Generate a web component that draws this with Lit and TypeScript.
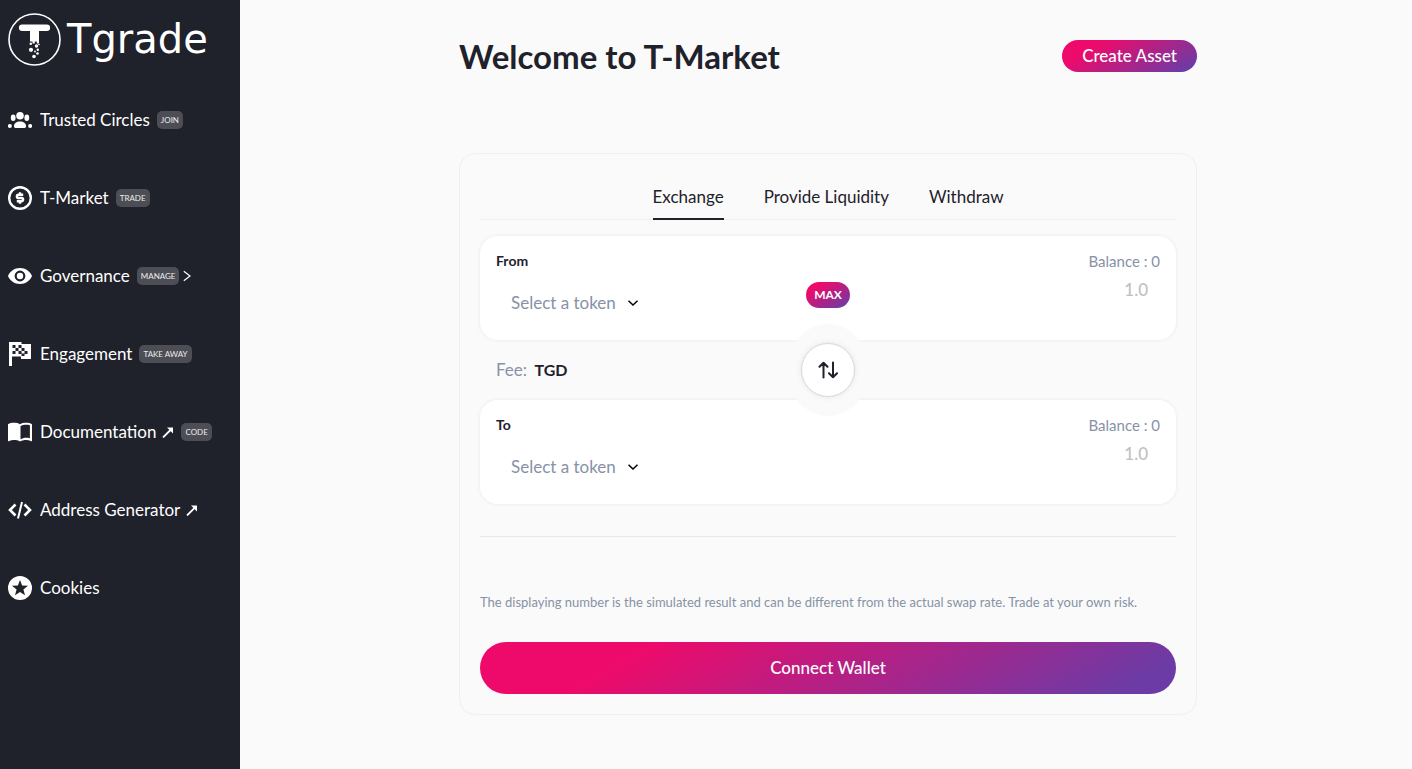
import { LitElement, html, css, svg, nothing } from "lit";
import type { TemplateResult, SVGTemplateResult } from "lit";
import { customElement, property, state } from "lit/decorators.js";
import { classMap } from "lit/directives/class-map.js";

interface NavItem {
  label: string;
  icon: SVGTemplateResult;
  badge?: string;
  external?: boolean;
  expandable?: boolean;
}

const icons = {
  circles: svg`<circle cx="12" cy="7.800" r="3.800"/><ellipse cx="5.200" cy="9.800" rx="2.400" ry="3.200"/><ellipse cx="18.800" cy="9.800" rx="2.400" ry="3.200"/><path d="M6 18.200c0-2.800 2.400-4.600 6-4.600s6 1.800 6 4.600c0 1.200-.7 1.800-1.900 1.800H7.900C6.700 20 6 19.400 6 18.200z"/><circle cx="1.900" cy="18" r="2"/><circle cx="22.100" cy="18" r="2"/>`,
  market: svg`<circle cx="12" cy="12" r="10.800" fill="none" stroke="currentColor" stroke-width="2.400"/><path d="M15.200 8.800h-4.700a1.600 1.600 0 0 0 0 3.200h3a1.600 1.600 0 0 1 0 3.200H8.800M12 6.200v2.600M12 15.200v2.600" fill="none" stroke="currentColor" stroke-width="2.400"/>`,
  eye: svg`<path fill-rule="evenodd" d="M12 4C6.500 4 1.900 7.300 0 12c1.900 4.700 6.500 8 12 8s10.100-3.300 12-8c-1.900-4.700-6.500-8-12-8zm0 13.400a5.400 5.400 0 1 1 0-10.800 5.400 5.400 0 0 1 0 10.800zm0-2.200a3.200 3.200 0 1 0 0-6.400 3.200 3.200 0 0 0 0 6.400z"/>`,
  flag: svg`<path fill-rule="evenodd" d="M1 0h12.500v2H23v15H13v-2.500H4V24H1zM4.500 3v3h3V3zM10.500 3v3h3V3zM7.500 6v3h3V6zM4.500 9v3h3V9zM13.500 6v3h3V6zM10.500 9v3h3V9zM16.500 9v3h3V9zM13.500 11.500v2.500h3v-2.500z"/>`,
  book: svg`<path fill-rule="evenodd" d="M12 4.300C10.300 3.200 8.300 2.800 6 2.800S1.700 3.200 0 4.300v16.500c0 .4.400.6.700.5 1.600-.8 3.600-1.200 5.300-1.200 2.200 0 4.400.4 6 1.500 1.600-1 3.900-1.500 6-1.500 1.800 0 3.700.4 5.300 1.200.3.100.7-.1.700-.5V4.300c-1.700-1.100-3.700-1.500-6-1.500s-4.300.4-6 1.500zM21.900 18.300c-1.200-.4-2.500-.5-3.900-.5-1.700 0-4.100.6-5.500 1.500V6.200C13.900 5.300 16.300 4.800 18 4.800c1.400 0 2.700.1 3.900.5z"/>`,
  code: svg`<path d="M7.500 6.500 2 12l5.500 5.500M16.500 6.500 22 12l-5.500 5.500" fill="none" stroke="currentColor" stroke-width="2.600"/><path d="M14 4 10 20.500" fill="none" stroke="currentColor" stroke-width="2"/>`,
  star: svg`<path fill-rule="evenodd" d="M12 0a12 12 0 1 0 0 24 12 12 0 0 0 0-24zm0 4 2.100 5.600 5.900.2-4.600 3.700 1.600 5.700-5-3.300-5 3.300 1.600-5.700L4 9.800l5.900-.2z"/>`,
};

const navItems: NavItem[] = [
  { label: "Trusted Circles", icon: icons.circles, badge: "JOIN" },
  { label: "T-Market", icon: icons.market, badge: "TRADE" },
  { label: "Governance", icon: icons.eye, badge: "MANAGE", expandable: true },
  { label: "Engagement", icon: icons.flag, badge: "TAKE AWAY" },
  { label: "Documentation", icon: icons.book, badge: "CODE", external: true },
  { label: "Address Generator", icon: icons.code, external: true },
  { label: "Cookies", icon: icons.star },
];

@customElement("side-nav")
class SideNav extends LitElement {
  static styles = css`
    :host {
      display: block;
      box-sizing: border-box;
      padding: 12px 8px;
      background: #1f212b;
      color: #fff;
      font: 17px/24px Lato, sans-serif;
    }
    .brand {
      display: flex;
      align-items: center;
      gap: 6px;
      height: 54px;
      color: inherit;
      text-decoration: none;
    }
    .mark {
      flex: none;
      width: 53px;
      height: 53px;
    }
    .name {
      font: 40px/54px "DejaVu Sans", sans-serif;
    }
    ul {
      display: flex;
      flex-direction: column;
      gap: 54px;
      margin: 42px 0 0;
      padding: 0;
      list-style: none;
    }
    .item {
      display: flex;
      align-items: center;
      color: inherit;
      text-decoration: none;
      white-space: nowrap;
    }
    .icon {
      flex: none;
      width: 24px;
      height: 24px;
      margin-right: 8px;
      fill: currentColor;
    }
    .badge {
      margin-left: 7px;
      padding: 0 4px;
      border-radius: 5px;
      background: #4c4d55;
      color: #eee;
      font-size: 8px;
      line-height: 18px;
    }
    .out {
      width: 12px;
      height: 12px;
      margin-left: 6px;
    }
    .more {
      width: 8px;
      height: 12px;
      margin-left: 4px;
    }
    .line {
      fill: none;
      stroke: currentColor;
    }
  `;

  render() {
    return html`
      <a class="brand" href="#" aria-label="Tgrade">
        <svg class="mark" viewBox="0 0 53 53" fill="#fff" aria-hidden="true">
          <circle cx="26.500" cy="26.500" r="25.500" fill="none" stroke="#fff" stroke-width="1.600" />
          <path d="M14.200 11.500h24.600a3.300 3.300 0 0 1 0 6.600H31V30.500h-2.200V28.500h-2v2h-2.300v-2H22V18.100h-7.800a3.300 3.300 0 0 1 0-6.600z" />
          <circle cx="22.800" cy="30.800" r="1.300" />
          <circle cx="28.500" cy="33" r="1.700" />
          <circle cx="31" cy="31.500" r=".8" />
          <circle cx="23" cy="36.800" r="2.100" />
          <circle cx="29.800" cy="36.800" r="1.200" />
          <circle cx="27" cy="38.500" r=".9" />
          <circle cx="29.500" cy="40.500" r="1.300" />
          <circle cx="26" cy="43.500" r="1.800" />
        </svg>
        <span class="name">Tgrade</span>
      </a>
      <nav>
        <ul>
          ${navItems.map(
            (item) => html`<li>
              <a class="item" href="#">
                <svg class="icon" viewBox="0 0 24 24" aria-hidden="true">${item.icon}</svg>
                <span>${item.label}</span>
                ${item.external
                  ? html`<svg class="out line" viewBox="0 0 12 12" stroke-width="1.800" aria-hidden="true">
                      <path d="M1 11.500 9.500 3" />
                      <path d="M5 1.500h6v6z" fill="currentColor" stroke="none" />
                    </svg>`
                  : nothing}
                ${item.badge ? html`<span class="badge">${item.badge}</span>` : nothing}
                ${item.expandable
                  ? html`<svg class="more line" viewBox="0 0 8 12" stroke-width="1.200" aria-hidden="true">
                      <path d="M.8 1.200 7 6 .8 10.800" />
                    </svg>`
                  : nothing}
              </a>
            </li>`,
          )}
        </ul>
      </nav>
    `;
  }
}

const gradient = css`linear-gradient(150deg, #ee0a6a 22%, #6d3ba5 92%)`;

@customElement("token-field")
class TokenField extends LitElement {
  @property() label = "";
  @property({ type: Boolean }) max = false;

  static styles = css`
    :host {
      display: block;
      padding: 16px;
      border-radius: 18px;
      background: #fff;
      box-shadow: 0 0 4px rgba(0, 0, 0, 0.07);
      font: 17px/24px Lato, sans-serif;
    }
    .head {
      display: flex;
      justify-content: space-between;
      line-height: 18px;
    }
    .title {
      color: #1f212b;
      font-size: 14px;
      font-weight: 700;
    }
    .balance {
      color: #8692a6;
      font-size: 15px;
    }
    .body {
      display: grid;
      grid-template-columns: 1fr auto 1fr;
      align-items: start;
      height: 54px;
    }
    .picker {
      display: inline-grid;
      justify-self: start;
      align-items: center;
      margin: 21px 0 0 15px;
    }
    select {
      grid-area: 1 / 1;
      field-sizing: content;
      appearance: none;
      margin: 0;
      padding: 0 22px 0 0;
      border: 0;
      background: none;
      color: #8692a6;
      font: inherit;
    }
    .chevron {
      grid-area: 1 / 1;
      justify-self: end;
      width: 10px;
      height: 6px;
      fill: none;
      stroke: #000;
      stroke-width: 1.5;
      pointer-events: none;
    }
    .max {
      grid-column: 2;
      margin: 12px 0 0;
      padding: 0 8px;
      border: 0;
      border-radius: 13px;
      background: ${gradient};
      color: #fff;
      font: 700 12px/26px Lato, sans-serif;
    }
    .amount {
      grid-column: 3;
      justify-self: end;
      box-sizing: border-box;
      width: 100%;
      margin: 8px 0 0;
      padding: 0 12px 0 0;
      border: 0;
      outline: 0;
      background: none;
      color: #1f212b;
      font: 500 17px/24px Lato, sans-serif;
      text-align: right;
    }
    .amount::placeholder {
      color: #bfbfbf;
    }
  `;

  render(): TemplateResult {
    return html`
      <div class="head">
        <label class="title" for="amount">${this.label}</label>
        <span class="balance">Balance : 0</span>
      </div>
      <div class="body">
        <div class="picker">
          <select aria-label="${this.label} token">
            <option>Select a token</option>
          </select>
          <svg class="chevron" viewBox="0 0 10 6" aria-hidden="true"><path d="M.5.7 5 5 9.500.7" /></svg>
        </div>
        ${this.max ? html`<button class="max" type="button">MAX</button>` : nothing}
        <input class="amount" id="amount" inputmode="decimal" placeholder="1.0" />
      </div>
    `;
  }
}

@customElement("app-root")
class AppRoot extends LitElement {
  @state() private active = 0;

  static styles = css`
    :host {
      display: flex;
      min-height: 100vh;
      background: #fafafa;
      color: #1f212b;
      font: 17px/24px Lato, sans-serif;
    }
    side-nav {
      flex: none;
      width: 240px;
    }
    main {
      flex: 1;
      min-width: 0;
      padding: 40px 16px 54px 20px;
    }
    .page {
      max-width: 738px;
      margin: 0 auto;
    }
    .top {
      display: flex;
      align-items: center;
      justify-content: space-between;
      margin-bottom: 81px;
    }
    h1 {
      margin: 0;
      font-size: 33px;
      font-weight: 700;
      line-height: 30px;
    }
    .cta {
      border: 0;
      background: ${gradient};
      color: #fff;
      font: 500 17px/32px Lato, sans-serif;
    }
    .create {
      padding: 0 20px;
      border-radius: 16px;
    }
    .card {
      padding: 20px;
      border: 1px solid #efefef;
      border-radius: 16px;
    }
    .tabs {
      display: flex;
      justify-content: center;
      gap: 40px;
      margin-bottom: 16px;
      box-shadow: inset 0 -1px #efefef;
    }
    .tab {
      padding: 11px 0 9px;
      border: 0;
      border-bottom: 2px solid transparent;
      background: none;
      color: inherit;
      font: inherit;
    }
    .tab.active {
      border-color: #1f212b;
    }
    .middle {
      display: grid;
      grid-template-columns: 1fr auto 1fr;
      align-items: center;
      height: 60px;
      padding: 0 16px;
    }
    .fee {
      color: #8692a6;
    }
    .fee b {
      margin-left: 3px;
      color: #1f212b;
      font-size: 16px;
    }
    .halo {
      z-index: 1;
      margin: -16px 0;
      padding: 19px 14px;
      border-radius: 50%;
      background: #fafafa;
    }
    .swap {
      display: grid;
      place-items: center;
      width: 54px;
      height: 54px;
      padding: 0;
      border: 1px solid #d9d9d9;
      border-radius: 50%;
      background: #fff;
      box-shadow: 0 0 6px rgba(0, 0, 0, 0.08);
    }
    .swap svg {
      width: 20px;
      height: 18px;
      fill: none;
      stroke: #1f212b;
      stroke-width: 2;
      stroke-linecap: round;
      stroke-linejoin: round;
    }
    hr {
      margin: 32px 0 57px;
      border: 0;
      border-top: 1px solid #e8e8e8;
    }
    .note {
      margin: 0 0 32px;
      color: #8692a6;
      font-size: 13px;
      line-height: 16px;
    }
    .connect {
      width: 100%;
      height: 52px;
      border-radius: 26px;
    }
  `;

  render() {
    const tabs = ["Exchange", "Provide Liquidity", "Withdraw"];
    return html`
      <side-nav></side-nav>
      <main>
        <div class="page">
          <header class="top">
            <h1>Welcome to T-Market</h1>
            <button class="cta create" type="button">Create Asset</button>
          </header>
          <section class="card">
            <div class="tabs" role="tablist">
              ${tabs.map(
                (tab, i) => html`<button
                  class=${classMap({ tab: true, active: i === this.active })}
                  type="button"
                  role="tab"
                  aria-selected=${i === this.active}
                  @click=${() => (this.active = i)}
                >${tab}</button>`,
              )}
            </div>
            <token-field label="From" max></token-field>
            <div class="middle">
              <div class="fee">Fee: <b>TGD</b></div>
              <div class="halo">
                <button class="swap" type="button" aria-label="Swap tokens">
                  <svg viewBox="0 0 20 18" aria-hidden="true">
                    <path d="M5.500 16.500v-14M1.500 5.800l4-4 4 4M15 1.500v14M11 12.200l4 4 4-4" />
                  </svg>
                </button>
              </div>
            </div>
            <token-field label="To"></token-field>
            <hr />
            <p class="note">
              The displaying number is the simulated result and can be different from the actual swap rate. Trade at your own risk.
            </p>
            <button class="cta connect" type="button">Connect Wallet</button>
          </section>
        </div>
      </main>
    `;
  }
}
